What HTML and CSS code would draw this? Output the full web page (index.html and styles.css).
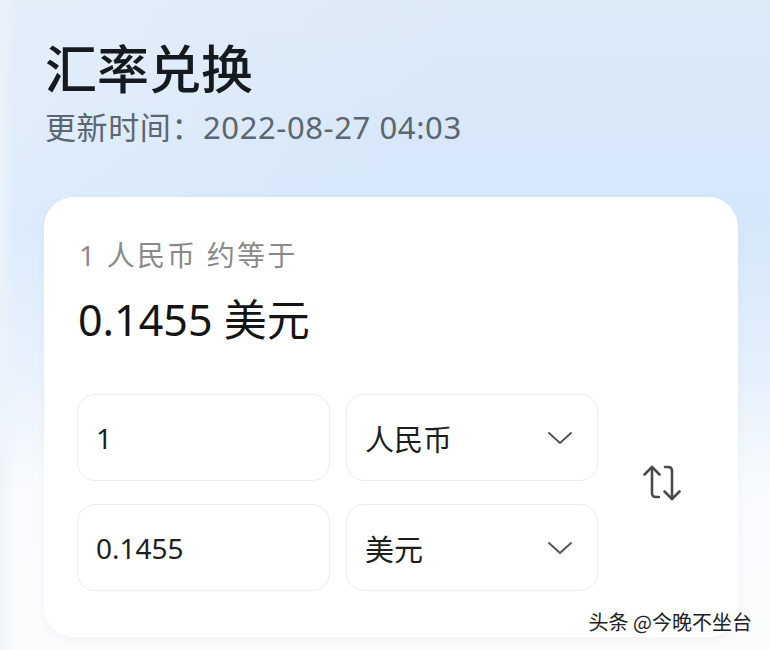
FILE: index.html
```html
<!DOCTYPE html>
<html lang="zh-CN">
<head>
  <meta charset="UTF-8">
  <meta name="viewport" content="width=device-width, initial-scale=1.0">
  <title>汇率兑换</title>
  <link rel="stylesheet" href="styles.css">
</head>
<body>
  <div class="page">
    <h1 class="title">汇率兑换</h1>
    <p class="updated">更新时间：2022-08-27 04:03</p>

    <div class="card">
      <p class="rate-label">1 人民币 约等于</p>
      <p class="rate-value">0.1455 美元</p>

      <div class="converter">
        <div class="field">1</div>
        <div class="field select">
          <span>人民币</span>
          <svg class="chevron" width="26" height="16" viewBox="0 0 26 16">
            <polyline points="2,3 13,13 24,3" fill="none" stroke="#555" stroke-width="2" stroke-linecap="round" stroke-linejoin="round"/>
          </svg>
        </div>
        <div class="swap">
          <svg width="44" height="44" viewBox="0 0 44 44">
            <g fill="none" stroke="#4a4a4a" stroke-width="2.6" stroke-linecap="round" stroke-linejoin="round">
              <path d="M12 5 V31 Q12 35 16 35 H19"/>
              <polyline points="4.5,12.5 12,5 19.5,12.5"/>
              <path d="M25 5 H28 Q32 5 32 9 V37"/>
              <polyline points="24.5,29.5 32,37 39.5,29.5"/>
            </g>
          </svg>
        </div>
        <div class="field">0.1455</div>
        <div class="field select">
          <span>美元</span>
          <svg class="chevron" width="26" height="16" viewBox="0 0 26 16">
            <polyline points="2,3 13,13 24,3" fill="none" stroke="#555" stroke-width="2" stroke-linecap="round" stroke-linejoin="round"/>
          </svg>
        </div>
      </div>
    </div>
  </div>

  <div class="watermark">头条 @今晚不坐台</div>
</body>
</html>
```

FILE: styles.css
```css
html, body {
  margin: 0;
  height: 100%;
}

body {
  font-family: "Noto Sans", "Noto Sans CJK SC", sans-serif;
  background:
    linear-gradient(90deg, rgba(238, 243, 249, 0.85) 0, rgba(238, 243, 249, 0) 16px),
    linear-gradient(115deg, rgba(255, 255, 255, 0.25) 0%, rgba(255, 255, 255, 0) 45%),
    linear-gradient(180deg, #dce9f7 0%, #d5e7fb 35%, #e6f0fc 58%, #f8fbfe 75%, #fbfcfd 100%);
  overflow: hidden;
  position: relative;
}

.page {
  padding: 39px 32px 0 44px;
}

.title {
  margin: 0 0 0 1px;
  font-size: 52px;
  line-height: 60px;
  font-weight: 500;
  color: #161a1f;
}

.updated {
  margin: 8px 0 0 1px;
  font-size: 31px;
  line-height: 40px;
  letter-spacing: 0.6px;
  color: #5b6671;
}

.card {
  margin-top: 50px;
  width: 694px;
  box-sizing: border-box;
  background: #fff;
  border-radius: 30px;
  padding: 40px 34px 46px 33px;
  box-shadow: 0 4px 10px rgba(180, 190, 205, 0.12);
}

.rate-label {
  margin: 0 0 0 2px;
  font-size: 28px;
  line-height: 36px;
  color: #8a8a8a;
  letter-spacing: 2.2px;
}

.rate-value {
  margin: 22px 0 0 1px;
  font-size: 43px;
  line-height: 50px;
  color: #141414;
}

.converter {
  margin-top: 49px;
  display: grid;
  grid-template-columns: 253px 252px 1fr;
  grid-template-rows: 87px 87px;
  column-gap: 16px;
  row-gap: 23px;
}

.field {
  box-sizing: border-box;
  border: 1.5px solid #ececec;
  border-radius: 18px;
  padding: 0 24px 0 18px;
  display: flex;
  align-items: center;
  justify-content: space-between;
  font-size: 28px;
  color: #1e1e1e;
}

.select {
  font-size: 29px;
}

.chevron {
  display: block;
}

.swap {
  grid-column: 3;
  grid-row: 1 / span 2;
  display: flex;
  align-items: center;
  justify-content: center;
  padding: 0 0 18px 6px;
}

.swap svg {
  display: block;
}

.watermark {
  position: absolute;
  right: 18px;
  bottom: 14px;
  font-family: "Noto Sans CJK SC", sans-serif;
  font-size: 20px;
  color: #222;
  text-shadow: 0 0 3px #fff, 0 0 3px #fff;
}
```
